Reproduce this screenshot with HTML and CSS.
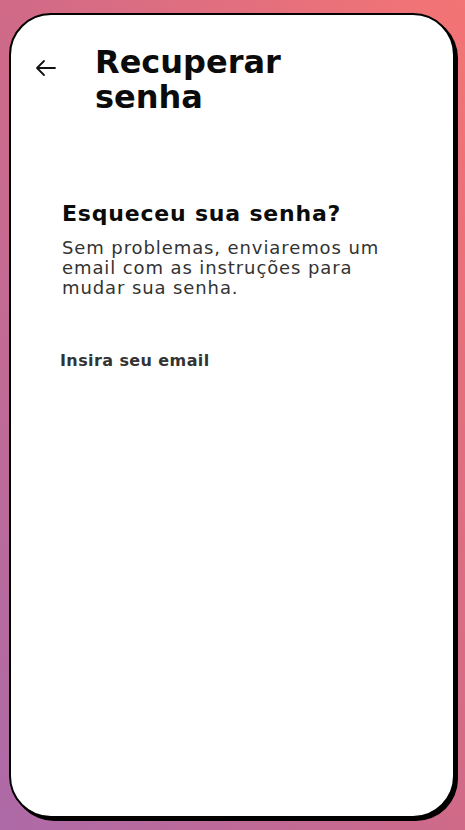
FILE: index.html
```html
<!DOCTYPE html>
<html lang="pt-BR">
<head>
<meta charset="utf-8">
<title>Recuperar senha</title>
<link rel="stylesheet" href="styles.css">
</head>
<body>
<div class="screen">
  <div class="card">
    <header class="header">
      <button class="back" aria-label="Voltar">
        <svg width="22" height="18" viewBox="0 0 22 18" fill="none" stroke="#111" stroke-width="1.8" stroke-linecap="round" stroke-linejoin="round">
          <path d="M20 9H2M9 2L2 9l7 7"/>
        </svg>
      </button>
      <h1 class="title">Recuperar senha</h1>
    </header>
    <section class="content">
      <h2 class="subtitle">Esqueceu sua senha?</h2>
      <p class="desc">Sem problemas, enviaremos um email com as instruções para mudar sua senha.</p>
      <label class="label">Insira seu email</label>
    </section>
  </div>
</div>
</body>
</html>
```
FILE: styles.css
```css
* { box-sizing: border-box; }
html, body { margin: 0; padding: 0; }
body {
  width: 465px;
  height: 830px;
  font-family: "DejaVu Sans", sans-serif;
  background: linear-gradient(to top right, #ad6aa8 0%, #d06a88 50%, #f47474 100%);
  overflow: hidden;
}
.screen {
  padding: 13px 10px 12px 9px;
  height: 830px;
}
.card {
  height: 805px;
  background: #fff;
  border: 2px solid #000;
  border-radius: 42px;
  box-shadow: 3px 3px 0 #000;
  padding: 30px 24px;
}
.header {
  display: flex;
  align-items: flex-start;
  gap: 38px;
}
.back {
  background: none;
  border: 0;
  padding: 0;
  margin-top: 14px;
  width: 22px;
  height: 18px;
  display: block;
}
.back svg { display: block; }
.title {
  margin: 0;
  font-size: 32px;
  line-height: 35px;
  font-weight: 700;
  color: #0b0b0b;
  width: 240px;
}
.content {
  padding: 85px 0 0 27px;
}
.subtitle {
  margin: 0;
  font-size: 22px;
  line-height: 28px;
  font-weight: 700;
  letter-spacing: 0.8px;
  color: #0b0b0b;
}
.desc {
  margin: 10px 0 0;
  font-size: 18px;
  line-height: 20px;
  letter-spacing: 0.9px;
  color: #333;
  width: 340px;
}
.label {
  display: block;
  margin: 53px 0 0 -2px;
  font-size: 16px;
  font-weight: 700;
  letter-spacing: 0.4px;
  color: #333;
}
```
